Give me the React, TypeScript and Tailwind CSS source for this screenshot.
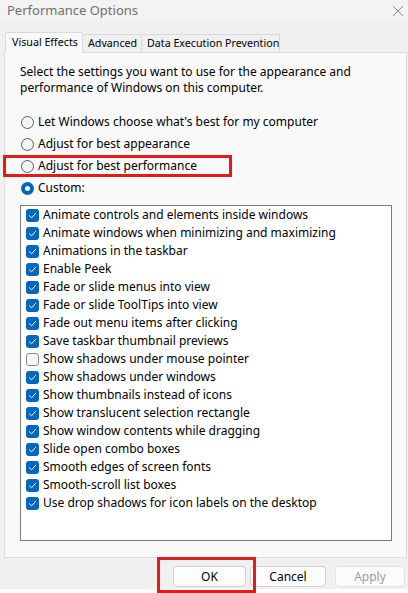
import React from 'react';

const effects: { label: string; checked: boolean }[] = [
  { label: 'Animate controls and elements inside windows', checked: true },
  { label: 'Animate windows when minimizing and maximizing', checked: true },
  { label: 'Animations in the taskbar', checked: true },
  { label: 'Enable Peek', checked: true },
  { label: 'Fade or slide menus into view', checked: true },
  { label: 'Fade or slide ToolTips into view', checked: true },
  { label: 'Fade out menu items after clicking', checked: true },
  { label: 'Save taskbar thumbnail previews', checked: true },
  { label: 'Show shadows under mouse pointer', checked: false },
  { label: 'Show shadows under windows', checked: true },
  { label: 'Show thumbnails instead of icons', checked: true },
  { label: 'Show translucent selection rectangle', checked: true },
  { label: 'Show window contents while dragging', checked: true },
  { label: 'Slide open combo boxes', checked: true },
  { label: 'Smooth edges of screen fonts', checked: true },
  { label: 'Smooth-scroll list boxes', checked: true },
  { label: 'Use drop shadows for icon labels on the desktop', checked: true },
];

const radios = [
  { label: "Let Windows choose what's best for my computer", selected: false },
  { label: 'Adjust for best appearance', selected: false },
  { label: 'Adjust for best performance', selected: false },
  { label: 'Custom:', selected: true },
];

const Radio = ({ selected }: { selected: boolean }) =>
  selected ? (
    <span className="flex h-[13px] w-[13px] items-center justify-center rounded-full bg-[#0067c0]">
      <span className="h-[5px] w-[5px] rounded-full bg-white" />
    </span>
  ) : (
    <span className="h-[13px] w-[13px] rounded-full border border-[#5d5d5d] bg-[#f5f5f5]" />
  );

const Checkbox = ({ checked }: { checked: boolean }) =>
  checked ? (
    <span className="flex h-[13px] w-[13px] items-center justify-center rounded-[3px] bg-[#0067c0]">
      <svg width="9" height="9" viewBox="0 0 9 9" fill="none">
        <path d="M1.5 4.8 L3.6 6.8 L7.5 2.4" stroke="white" strokeWidth="1" strokeLinecap="round" strokeLinejoin="round" />
      </svg>
    </span>
  ) : (
    <span className="h-[13px] w-[13px] rounded-[3px] border border-[#8a8a8a] bg-[#f6f6f6]" />
  );

export default function App() {
  return (
    <div
      className="relative h-[593px] w-[408px] overflow-hidden bg-[#f0f0f0] text-[12px] text-black"
      style={{ fontFamily: '"Noto Sans", "Open Sans", sans-serif' }}
    >
      {/* title bar */}
      <div className="flex h-[21px] items-center justify-between bg-[#f3f3f3] pl-[7px] pr-[3px]">
        <span className="text-[13px] text-[#6e6e6e]">Performance Options</span>
        <svg width="12" height="12" viewBox="0 0 12 12" className="mr-[1px]">
          <path d="M1 1 L11 11 M11 1 L1 11" stroke="#8a8a8a" strokeWidth="1" />
        </svg>
      </div>

      {/* tabs */}
      <div className="mt-[11px] flex items-end whitespace-nowrap pl-[5px] text-[10.7px]">
        <div className="relative z-10 -mb-px flex h-[21px] w-[78px] shrink-0 items-center rounded-t-[2px] border border-b-0 border-[#dadada] bg-[#f9f9f9] pl-[6px] pb-[2px]">
          Visual Effects
        </div>
        <div className="flex h-[18px] w-[59px] shrink-0 items-center border border-b-0 border-l-0 border-[#dadada] bg-[#f0f0f0] pl-[5px]">
          Advanced
        </div>
        <div className="flex h-[18px] w-[138px] shrink-0 items-center border border-b-0 border-l-0 border-[#dadada] bg-[#f0f0f0] pl-[5px]">
          Data Execution Prevention
        </div>
      </div>

      {/* panel */}
      <div className="ml-[4px] h-[506px] w-[403px] border border-[#dcdcdc] bg-[#f9f9f9] pl-[15px] pt-[11px]">
        <p className="leading-[16px]">
          Select the settings you want to use for the appearance and
          <br />
          performance of Windows on this computer.
        </p>

        <div className="mt-[15px] flex flex-col">
          {radios.map((r) => (
            <div key={r.label} className="flex h-[22px] items-center gap-[4px] pl-px">
              <Radio selected={r.selected} />
              <span>{r.label}</span>
            </div>
          ))}
        </div>

        <div className="mt-[6px] h-[336px] w-[372px] border border-[#7a7a7a] bg-white pl-[5px]">
          {effects.map((e) => (
            <div key={e.label} className="flex h-[18px] items-center gap-[4px]">
              <Checkbox checked={e.checked} />
              <span>{e.label}</span>
            </div>
          ))}
        </div>
      </div>

      {/* buttons */}
      <div className="mt-[8px] flex pl-[173px]">
        <button className="h-[21px] w-[73px] rounded-[4px] border border-[#d0d0d0] bg-[#fdfdfd]">OK</button>
        <button className="ml-[4px] h-[21px] w-[76px] rounded-[4px] border border-[#d0d0d0] bg-[#fdfdfd]">Cancel</button>
        <button className="ml-[9px] h-[21px] w-[70px] rounded-[4px] border border-[#e2e2e2] bg-[#fbfbfb] text-[#9d9d9d]">
          Apply
        </button>
      </div>

      <div className="absolute bottom-0 left-0 h-[4px] w-full bg-white" />

      {/* annotation boxes */}
      <div className="pointer-events-none absolute left-[3px] top-[155px] h-[22px] w-[229px] border-[3px] border-[#e21b1b]" />
      <div className="pointer-events-none absolute left-[157px] top-[557px] h-[36px] w-[99px] border-[3px] border-[#e21b1b]" />
    </div>
  );
}
